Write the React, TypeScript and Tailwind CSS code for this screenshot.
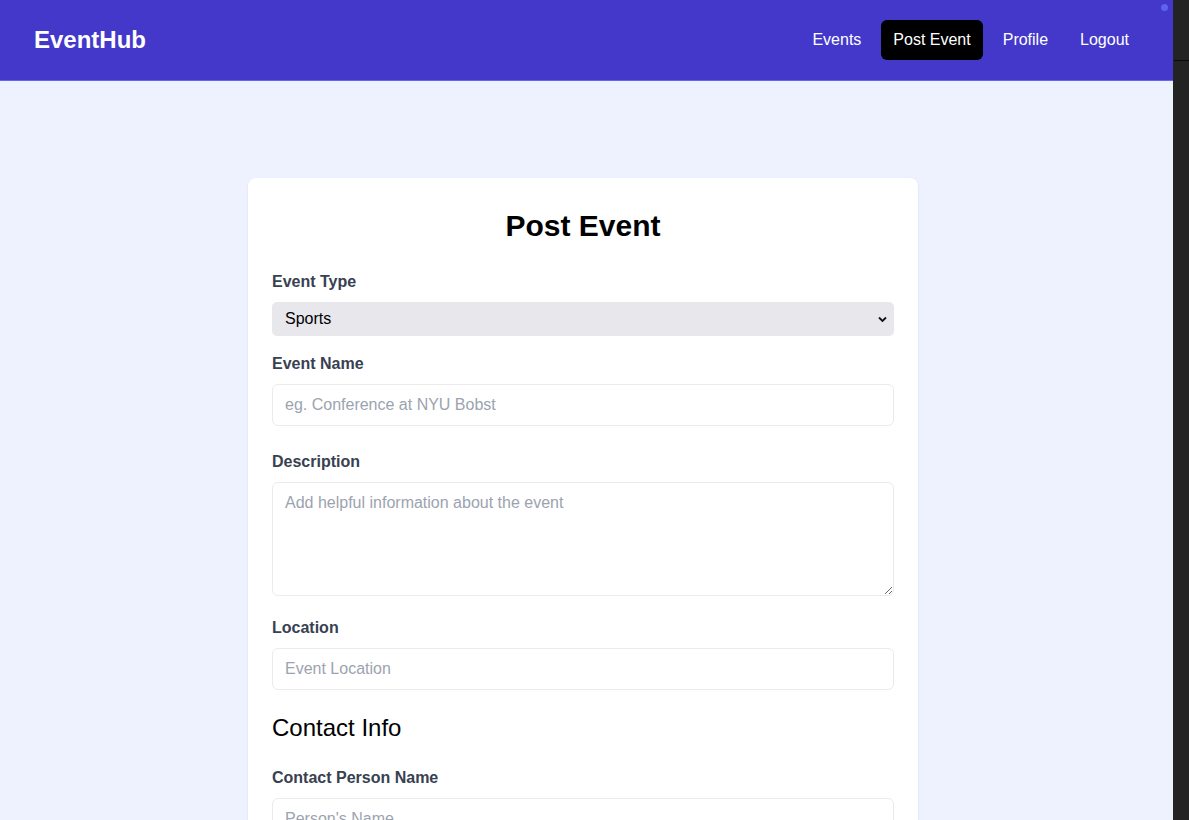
import React, { useState } from 'react';

const navItems = ['Events', 'Post Event', 'Profile', 'Logout'];

const eventTypes = ['Sports', 'Music', 'Academic', 'Social', 'Career'];

const App: React.FC = () => {
  const [eventType, setEventType] = useState('Sports');
  const active = 'Post Event';

  return (
    <div className="flex h-screen overflow-hidden font-['Liberation_Sans',Arial,sans-serif]">
      {/* Page */}
      <div className="flex-1 flex flex-col bg-[#eef2ff]">
        <header className="relative h-[81px] shrink-0 flex items-center justify-between pl-[34px] pr-8 bg-[#4338ca] border-b border-[#6366f1]">
          <span className="text-2xl font-bold text-white">EventHub</span>
          <nav className="flex items-center gap-2">
            {navItems.map((item) => (
              <a
                key={item}
                href="#"
                className={`px-3 py-2 rounded-md text-base leading-6 text-white ${
                  item === active ? 'bg-black' : ''
                }`}
              >
                {item}
              </a>
            ))}
          </nav>
          {/* little status dot */}
          <span className="absolute top-[4px] right-[5px] w-[7px] h-[7px] rounded-full bg-[#5b63f0]" />
        </header>

        <main className="flex justify-center pr-[7px] pt-[97px]">
          <div className="w-[670px] shrink-0 bg-white rounded-lg shadow-[0_1px_3px_rgba(0,0,0,0.08)] px-6 pt-[30px] pb-8">
            <h1 className="text-[30px] leading-9 font-bold text-black text-center mb-[26px]">Post Event</h1>

            <form>
              {/* Event Type */}
              <label className="block text-base leading-6 font-bold text-[#374151] mb-2">Event Type</label>
              <div className="relative mb-4">
                <select
                  value={eventType}
                  onChange={(e) => setEventType(e.target.value)}
                  className="appearance-none block w-full h-[34px] pl-[13px] pr-8 rounded-[5px] bg-[#e8e7ec] text-base text-black outline-none"
                >
                  {eventTypes.map((t) => (
                    <option key={t}>{t}</option>
                  ))}
                </select>
                <svg
                  className="pointer-events-none absolute right-[7px] top-[14px]"
                  width="9"
                  height="7"
                  viewBox="0 0 9 7"
                  fill="none"
                >
                  <path d="M1 1.5 L4.5 5 L8 1.5" stroke="#111" strokeWidth="1.8" />
                </svg>
              </div>

              {/* Event Name */}
              <label className="block text-base leading-6 font-bold text-[#374151] mb-2">Event Name</label>
              <input
                type="text"
                placeholder="eg. Conference at NYU Bobst"
                className="block w-full h-[42px] px-3 rounded-md border border-[#ebebeb] bg-white text-base placeholder:text-[#9ca3af] outline-none mb-6"
              />

              {/* Description */}
              <label className="block text-base leading-6 font-bold text-[#374151] mb-2">Description</label>
              <textarea
                rows={4}
                placeholder="Add helpful information about the event"
                className="block w-full h-[114px] px-3 py-2 rounded-md border border-[#ebebeb] bg-white text-base leading-6 placeholder:text-[#9ca3af] outline-none mb-5"
              />

              {/* Location */}
              <label className="block text-base leading-6 font-bold text-[#374151] mb-2">Location</label>
              <input
                type="text"
                placeholder="Event Location"
                className="block w-full h-[42px] px-3 rounded-md border border-[#ebebeb] bg-white text-base placeholder:text-[#9ca3af] outline-none mb-[22px]"
              />

              <h2 className="text-2xl leading-8 font-normal text-black mb-[22px]">Contact Info</h2>

              {/* Contact Person */}
              <label className="block text-base leading-6 font-bold text-[#374151] mb-2">Contact Person Name</label>
              <input
                type="text"
                placeholder="Person's Name"
                className="block w-full h-[42px] px-3 rounded-md border border-[#ebebeb] bg-white text-base placeholder:text-[#9ca3af] outline-none mb-6"
              />

              <label className="block text-base leading-6 font-bold text-[#374151] mb-2">Contact Email</label>
              <input
                type="email"
                placeholder="Person's Email"
                className="block w-full h-[42px] px-3 rounded-md border border-[#ebebeb] bg-white text-base placeholder:text-[#9ca3af] outline-none"
              />
            </form>
          </div>
        </main>
      </div>

      {/* Dark strip on the right */}
      <div className="w-4 shrink-0 bg-[#232323] flex flex-col">
        <div className="h-[60px]" />
        <div className="h-[1px] ml-[1px] bg-[#0a0a0a]" />
      </div>
    </div>
  );
};

export default App;
